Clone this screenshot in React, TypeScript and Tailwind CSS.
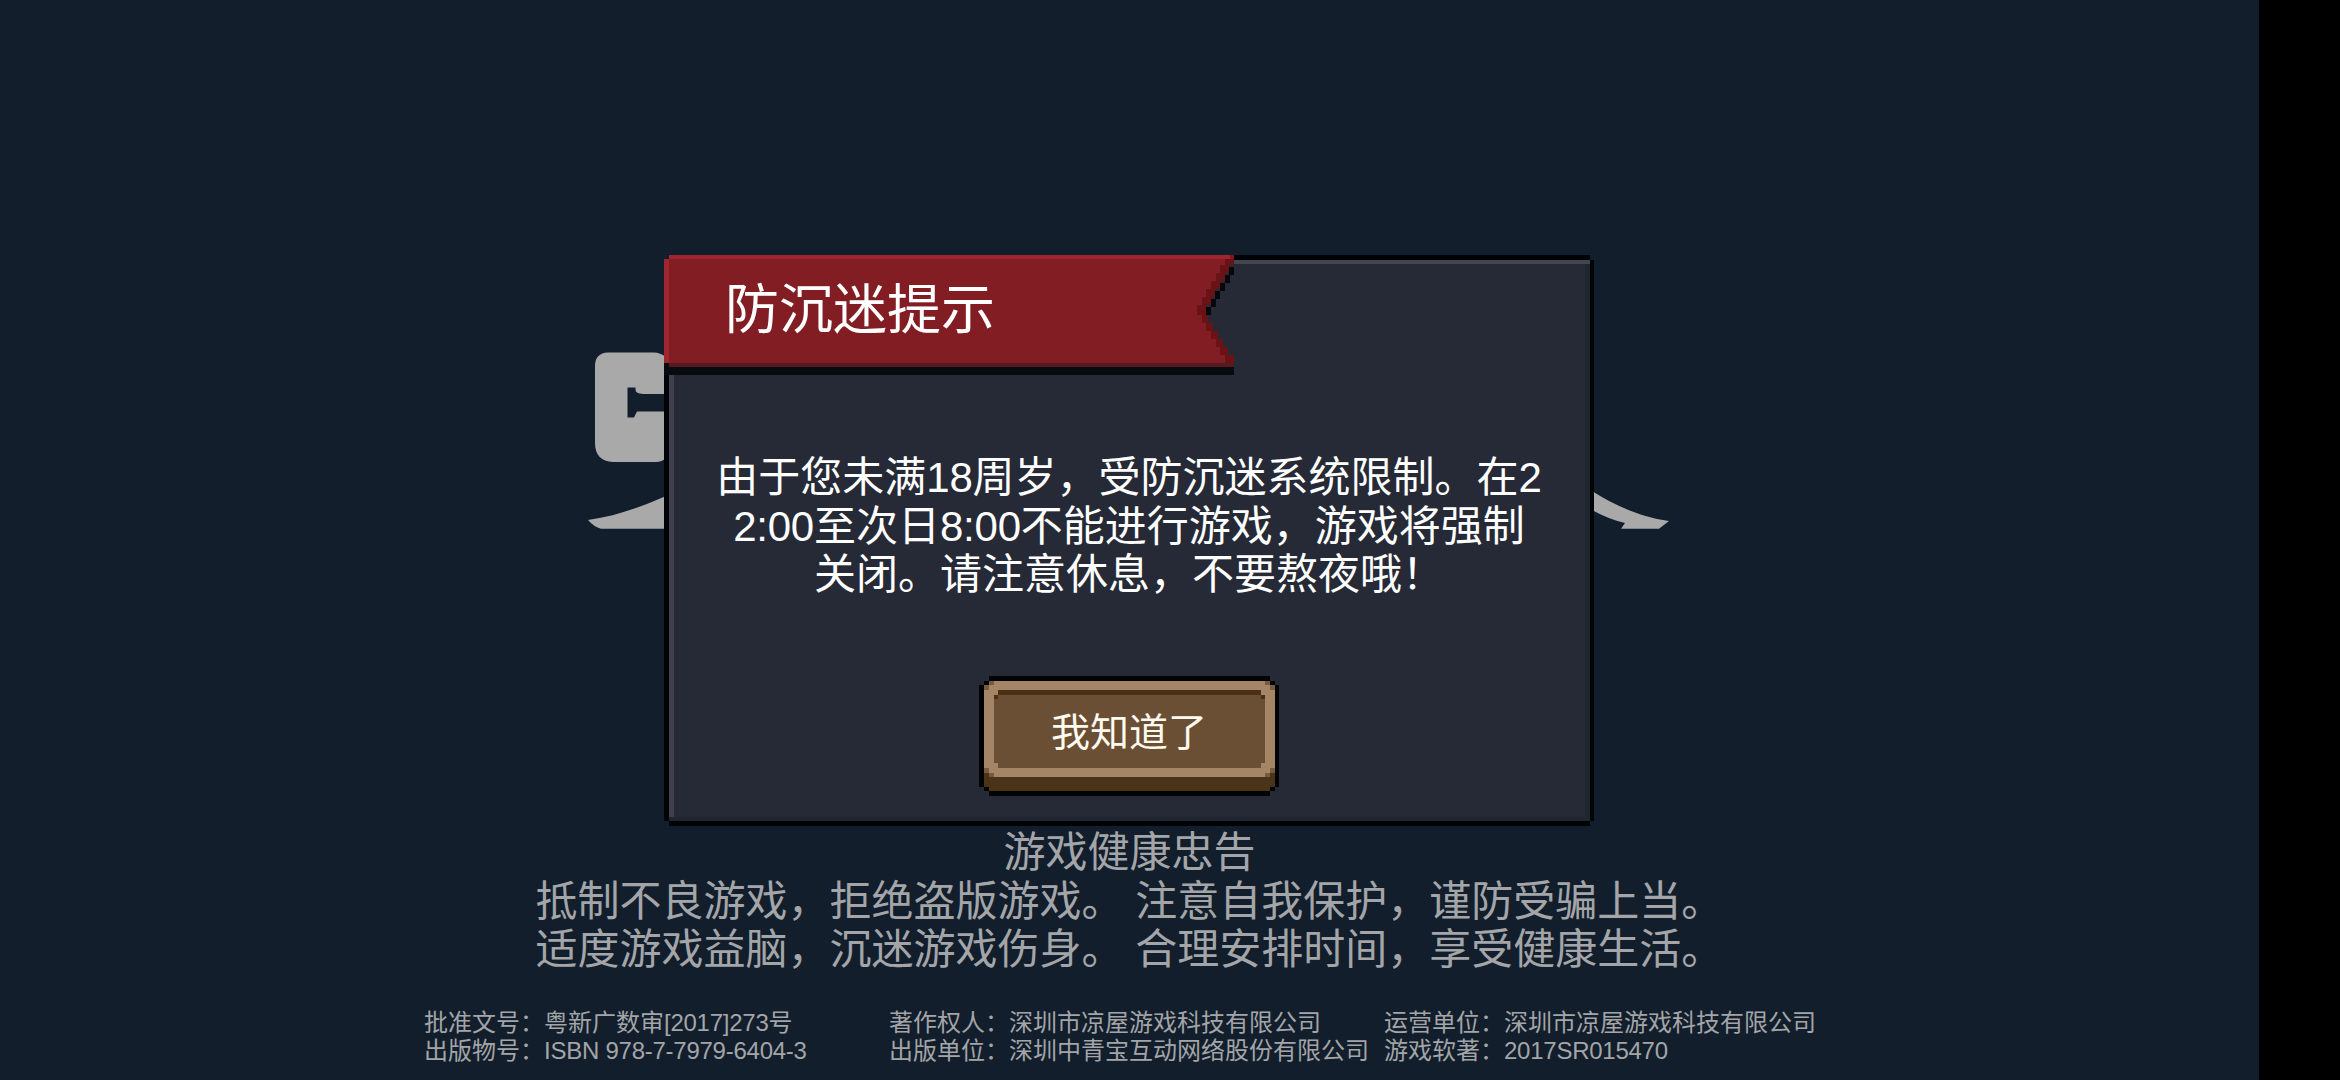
const FONT = "font-['Liberation_Sans','Noto_Sans_CJK_SC',sans-serif]";

const NOTICE_LINES = [
  "由于您未满18周岁，受防沉迷系统限制。在2",
  "2:00至次日8:00不能进行游戏，游戏将强制",
  "关闭。请注意休息，不要熬夜哦！"
];

const ADVICE_LINES = [
  "抵制不良游戏，拒绝盗版游戏。 注意自我保护，谨防受骗上当。",
  "适度游戏益脑，沉迷游戏伤身。 合理安排时间，享受健康生活。"
];

const LICENSE_COLUMNS = [
  ["批准文号：粤新广数审[2017]273号", "出版物号：ISBN 978-7-7979-6404-3"],
  ["著作权人：深圳市凉屋游戏科技有限公司", "出版单位：深圳中青宝互动网络股份有限公司"],
  ["运营单位：深圳市凉屋游戏科技有限公司", "游戏软著：2017SR015470"]
];

// latin runs sit slightly tighter than the chinese around them
function MixedText({ text }: { text: string }) {
  return (
    <>
      {text.split(/([\x21-\x7e][\x20-\x7e]*)/).map((part, index) =>
        index % 2 === 1 ? (
          <span key={index} className="tracking-[-0.25px]">{part}</span>
        ) : (
          part
        )
      )}
    </>
  );
}

// studio logo, mostly hidden behind the dialog
function StudioLogo() {
  return (
    <svg className="absolute left-[580px] top-[340px] h-[200px] w-[1100px]" viewBox="580 340 1100 200" fill="#a9a9a9">
      <path d="M608 352.5H654Q660 352.5 666 357V394H643Q635.5 393.5 635.5 390V387.5H627.5V417.5H634L637 411.5H666V458Q662 462 656 462H613Q595 461 595 443V366Q595 353 608 352.5Z" />
      <path d="M588 520C616 516 638 508 666 496V528.7H601Q594 527 588 520Z" />
      <path d="M1592 491C1614 505 1640 517 1669 521L1659 528.7H1621L1625 523Q1608 519 1592 510Z" />
    </svg>
  );
}

function DialogFrame() {
  return (
    <svg className="absolute inset-0 h-[571px] w-[930px]" viewBox="0 0 930 571" shapeRendering="crispEdges">
      <path fill="#010407" d="M5 0H926V5H930V566H926V571H5V566H0V5H5Z" />
      <path fill="#262a36" d="M5 5H926V566H5Z" />
      <path fill="#43464f" d="M5 5H926V9H5Z" />
      <path fill="#3f404c" d="M5 5H10V562H5Z" />
      <path fill="#20262e" d="M921 9H926V566H5V562H921Z" />
    </svg>
  );
}

const RIBBON_STEPS = [
  { x: 561, y: 2, w: 9, h: 8 },
  { x: 556, y: 10, w: 9, h: 8 },
  { x: 552, y: 18, w: 9, h: 8 },
  { x: 547, y: 26, w: 9, h: 8 },
  { x: 542, y: 34, w: 9, h: 8 },
  { x: 538, y: 42, w: 9, h: 8 },
  { x: 533, y: 50, w: 9, h: 10 },
  { x: 538, y: 60, w: 6, h: 8 },
  { x: 542, y: 68, w: 7, h: 8 },
  { x: 547, y: 76, w: 7, h: 8 },
  { x: 552, y: 84, w: 7, h: 8 },
  { x: 556, y: 92, w: 8, h: 8 },
  { x: 561, y: 100, w: 9, h: 8 }
];

function Ribbon() {
  return (
    <svg className="absolute left-0 top-0 h-[120px] w-[571px]" viewBox="0 0 571 120" shapeRendering="crispEdges">
      <path fill="#070a0f" d="M0 108H5V112H570V120H0Z" />
      {RIBBON_STEPS.map((s) => (
        <g key={s.y}>
          <rect x={5} y={s.y} width={s.x - 5} height={s.h} fill="#821d23" />
          <rect x={s.x} y={s.y} width={s.w} height={s.h} fill="#6b1216" />
          {s.y >= 10 && s.y <= 50 && <rect x={s.x + s.w} y={s.y + 2} width={5} height={8} fill="#05070a" />}
        </g>
      ))}
      <path fill="#9f2630" d="M5 0H566V4H5V108H0V4H5Z" />
      <path fill="#7a1a20" d="M566 0H570V4H566Z" />
      <path fill="#551a20" d="M5 108H570V112H5Z" />
    </svg>
  );
}

function ConfirmButton() {
  return (
    <button className="relative mx-auto flex h-[120px] w-[300px] justify-center">
      <svg className="absolute inset-0 h-[120px] w-[300px]" viewBox="0 0 300 120" shapeRendering="crispEdges">
        <path fill="#020305" d="M10 0H291V5H296V9H300V111H296V115H291V120H10V115H5V111H0V9H5V5H10Z" />
        <path fill="#4b3319" d="M10 5H291V9H296V111H291V115H10V111H5V9H10Z" />
        <path fill="#a48566" d="M15 5H286V9H291V14H296V92H291V97H286V101H15V97H10V92H5V14H10V9H15Z" />
        <path fill="#775b3e" d="M10 5H15V9H10ZM5 9H10V14H5ZM286 5H291V9H286ZM291 9H296V14H291ZM5 92H10V97H5ZM10 97H15V101H10ZM291 92H296V97H291ZM286 97H291V101H286Z" />
        <path fill="#6a4f35" d="M19 14H282V19H286V87H282V92H19V87H15V19H19Z" />
        <path fill="#4b3017" d="M19 14H282V19H19ZM15 19H19V23H15ZM282 19H286V23H282Z" />
      </svg>
      <span className="relative mt-[29px] text-[39px] leading-[56px] text-[#fffaf0]">我知道了</span>
    </button>
  );
}

function NoticeDialog() {
  return (
    <section className="absolute left-[664px] top-[255px] h-[571px] w-[930px]">
      <DialogFrame />
      <Ribbon />
      <div className="relative flex h-full flex-col">
        <h1 className="h-[112px] pl-[61px] pt-[15px] text-[54px] leading-[80px] text-white">防沉迷提示</h1>
        <div className="mt-[87px] h-[222px] text-center text-[42px] leading-[48.5px] text-white">
          {NOTICE_LINES.map((line) => (
            <p key={line} className="whitespace-nowrap">
              <MixedText text={line} />
            </p>
          ))}
        </div>
        <ConfirmButton />
      </div>
    </section>
  );
}

export default function App() {
  return (
    <div className={`flex h-[1080px] w-[2340px] overflow-hidden bg-black ${FONT}`}>
      <main className="relative flex h-full w-[2259px] flex-col bg-[#121e2b] pt-[829px] text-[#a3a5a8]">
        <StudioLogo />
        <div className="text-center text-[42px] leading-[48.5px]">
          <h2>游戏健康忠告</h2>
        </div>
        <div className="pl-[535.5px] text-[42px] leading-[48.5px]">
          {ADVICE_LINES.map((line) => (
            <p key={line} className="whitespace-pre">{line}</p>
          ))}
        </div>
        <footer className="mt-[34px] grid grid-cols-[465px_495px_500px] pl-[424px] text-[24px] leading-[28px]">
          {LICENSE_COLUMNS.map((rows) => (
            <div key={rows[0]} className="whitespace-nowrap">
              {rows.map((row) => (
                <p key={row}>
                  <MixedText text={row} />
                </p>
              ))}
            </div>
          ))}
        </footer>
        <NoticeDialog />
      </main>
    </div>
  );
}
